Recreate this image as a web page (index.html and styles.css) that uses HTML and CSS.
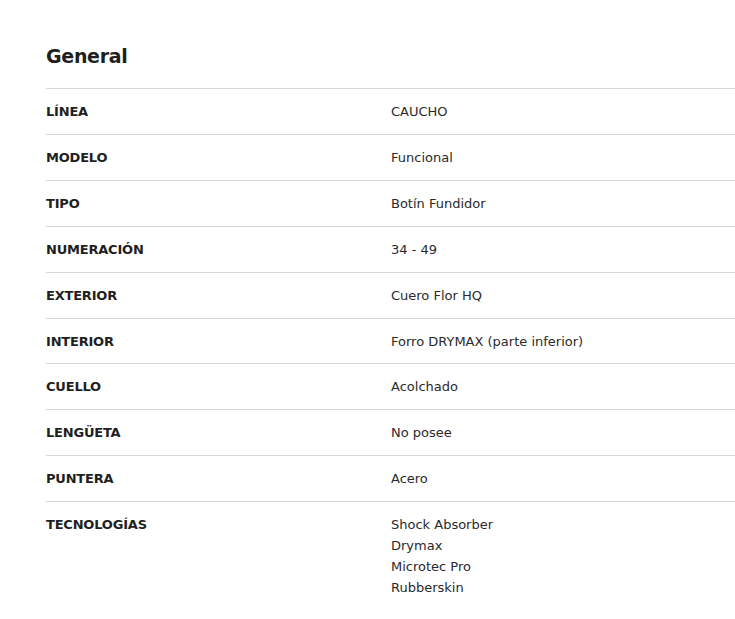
FILE: index.html
```html
<!DOCTYPE html>
<html lang="es">
<head>
<meta charset="utf-8">
<title>General</title>
<link rel="stylesheet" href="styles.css">
</head>
<body>
<section class="specs">
  <h2 class="specs-title">General</h2>
  <div class="specs-table">
    <div class="row"><div class="label">LÍNEA</div><div class="value">CAUCHO</div></div>
    <div class="row"><div class="label">MODELO</div><div class="value">Funcional</div></div>
    <div class="row"><div class="label">TIPO</div><div class="value">Botín Fundidor</div></div>
    <div class="row"><div class="label">NUMERACIÓN</div><div class="value">34 - 49</div></div>
    <div class="row"><div class="label">EXTERIOR</div><div class="value">Cuero Flor HQ</div></div>
    <div class="row"><div class="label">INTERIOR</div><div class="value">Forro DRYMAX (parte inferior)</div></div>
    <div class="row"><div class="label">CUELLO</div><div class="value">Acolchado</div></div>
    <div class="row"><div class="label">LENGÜETA</div><div class="value">No posee</div></div>
    <div class="row"><div class="label">PUNTERA</div><div class="value">Acero</div></div>
    <div class="row"><div class="label">TECNOLOGÍAS</div><div class="value">Shock Absorber<br>Drymax<br>Microtec Pro<br>Rubberskin</div></div>
  </div>
</section>
</body>
</html>
```
FILE: styles.css
```css
html, body {
  margin: 0;
  padding: 0;
  background: #ffffff;
}
body {
  font-family: "DejaVu Sans", "Noto Sans", sans-serif;
  color: #222222;
  overflow: hidden;
}
.specs {
  padding: 44px 0 0 46px;
  width: 690px;
}
.specs-title {
  margin: 0 0 20px 0;
  font-size: 19px;
  line-height: 24px;
  letter-spacing: -0.3px;
  font-weight: 700;
  color: #1f1f1f;
}
.specs-table {
  display: flex;
  flex-direction: column;
}
.row {
  display: grid;
  grid-template-columns: 345px 345px;
  border-top: 1px solid #d6d6d6;
}
.label, .value {
  padding: 13px 0 11px 0;
  font-size: 13px;
  line-height: 20.9px;
}
.label {
  font-weight: 700;
  color: #1f1f1f;
  letter-spacing: -0.2px;
}
.value {
  color: #2a2a2a;
}
```
